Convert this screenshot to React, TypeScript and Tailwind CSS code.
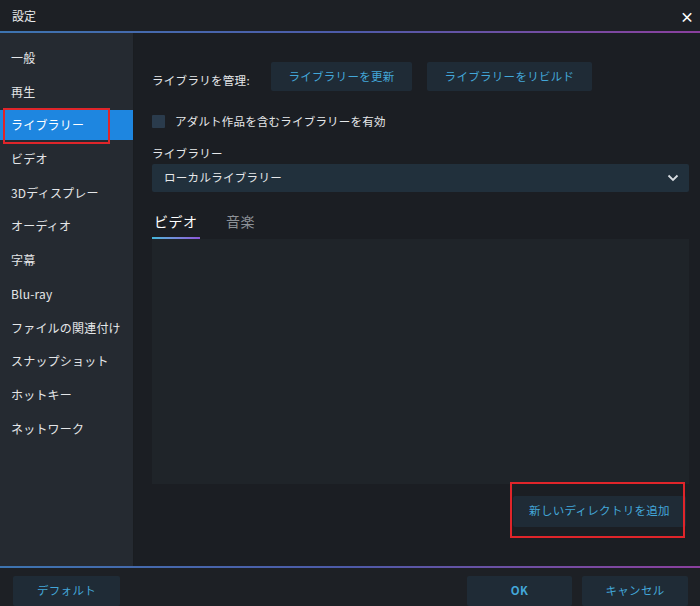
import React from "react";

const font = { fontFamily: '"Noto Sans CJK JP", "Noto Sans", sans-serif' };

const navItems = [
  "一般",
  "再生",
  "ライブラリー",
  "ビデオ",
  "3Dディスプレー",
  "オーディオ",
  "字幕",
  "Blu-ray",
  "ファイルの関連付け",
  "スナップショット",
  "ホットキー",
  "ネットワーク",
];

function Rule() {
  return (
    <div className="h-[2px] w-full bg-gradient-to-r from-[#3d74b0] via-[#4d5aa8] to-[#8a3f9e]" />
  );
}

function DarkButton({ children, className = "" }: { children: React.ReactNode; className?: string }) {
  return (
    <button
      className={`flex items-center justify-center rounded-[2px] bg-[#1f2b36] text-[11.5px] tracking-[0.3px] text-[#43a7d9] ${className}`}
    >
      {children}
    </button>
  );
}

export default function App() {
  return (
    <div className="flex h-[606px] w-[700px] flex-col bg-[#1b1e23] text-[#e6e8ea]" style={font}>
      {/* title bar */}
      <div className="flex h-[31px] items-center justify-between bg-[#1d2025] pl-[12px] pr-[6px]">
        <span className="text-[12px] text-[#e9ebed]">設定</span>
        <span className="text-[14px] font-bold leading-none text-white">×</span>
      </div>
      <Rule />

      <div className="flex min-h-0 flex-1">
        {/* sidebar */}
        <div className="flex w-[133px] flex-col bg-[#252a31] pt-[10px]">
          {navItems.map((item) => {
            const active = item === "ライブラリー";
            return (
              <div key={item} className="relative">
                <div
                  className={`mb-[3.7px] flex h-[30px] items-center pl-[11px] text-[12px] tracking-[0.2px] ${
                    active ? "bg-[#1e86e0] text-white" : "text-[#e4e6e8]"
                  }`}
                >
                  {item}
                </div>
                {active && (
                  <div className="pointer-events-none absolute left-[3px] top-[-2px] h-[36px] w-[107px] border-2 border-[#e0252a]" />
                )}
              </div>
            );
          })}
        </div>

        {/* main panel */}
        <div className="flex flex-1 flex-col border-l border-[#1a1d21] bg-[#1b1e23] pl-[18px] pr-[11px] pt-[29px]">
          <div className="flex items-center">
            <span className="mt-[8px] w-[119px] text-[11.5px] tracking-[0.3px] text-[#e6e8ea]">ライブラリを管理:</span>
            <DarkButton className="h-[29px] w-[141px]">ライブラリーを更新</DarkButton>
            <DarkButton className="ml-[15px] h-[29px] w-[165px]">ライブラリーをリビルド</DarkButton>
          </div>

          <div className="mt-[22px] flex items-center">
            <span className="h-[13px] w-[13px] rounded-[1px] bg-[#2a3b4c]" />
            <span className="ml-[10px] text-[11.5px] tracking-[0.2px]">アダルト作品を含むライブラリーを有効</span>
          </div>

          <div className="mt-[15px] text-[11.5px] tracking-[0.3px]">ライブラリー</div>

          <div className="mt-[1px] flex h-[28px] items-center justify-between rounded-[2px] bg-[#21303c] pl-[12px] pr-[10px]">
            <span className="text-[11.5px] tracking-[0.3px]">ローカルライブラリー</span>
            <svg width="12" height="8" viewBox="0 0 12 8" fill="none">
              <path d="M1.5 1.5 L6 6 L10.5 1.5" stroke="#d8dde2" strokeWidth="1.8" />
            </svg>
          </div>

          {/* tabs */}
          <div className="mt-[19px] flex items-end">
            <div className="flex flex-col">
              <span className="px-[2px] text-[14px] tracking-[0.5px] text-white">ビデオ</span>
              <div className="mt-[5px] h-[2px] w-[48px] bg-gradient-to-r from-[#3fb5d8] to-[#8a55d8]" />
            </div>
            <span className="mb-[7px] ml-[26px] text-[14px] tracking-[0.5px] text-[#8d9298]">音楽</span>
          </div>

          <div className="h-[245px] bg-[#1f2429]" />

          <div className="relative mt-[12px] flex justify-end">
            <DarkButton className="mr-[3px] h-[31px] w-[173px]">新しいディレクトリを追加</DarkButton>
            <div className="pointer-events-none absolute right-[4px] top-[-14px] h-[56px] w-[175px] border-2 border-[#e0252a]" />
          </div>
        </div>
      </div>

      <Rule />
      {/* footer */}
      <div className="flex h-[38px] items-end justify-between bg-[#1d2025] pl-[13px] pr-[12px]">
        <DarkButton className="h-[30px] w-[107px]">デフォルト</DarkButton>
        <div className="flex gap-[10px]">
          <DarkButton className="h-[30px] w-[105px] font-bold">OK</DarkButton>
          <DarkButton className="h-[30px] w-[106px]">キャンセル</DarkButton>
        </div>
      </div>
    </div>
  );
}
